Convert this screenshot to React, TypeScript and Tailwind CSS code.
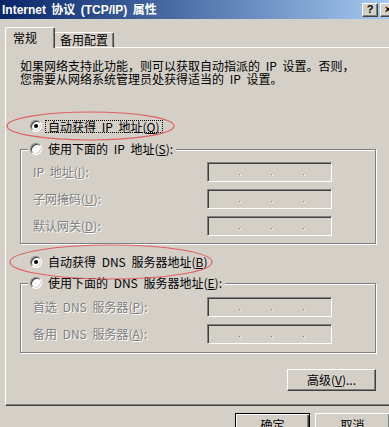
import React from "react";

function Radio({ checked }: { checked?: boolean }) {
  return (
    <span className="relative inline-block w-[12px] h-[12px] shrink-0 rounded-full bg-white border border-t-[#808080] border-l-[#808080] border-r-white border-b-white shadow-[inset_1px_1px_0_#404040,inset_-1px_-1px_0_#d4d0c8]">
      {checked && (
        <span className="absolute left-[3px] top-[3px] w-[4px] h-[4px] rounded-full bg-black" />
      )}
    </span>
  );
}

function IpDot() {
  return (
    <span className="w-[3px] h-[20px] flex items-center justify-center shrink-0">
      <span className="block w-[1px] h-[1px] mt-[5px] bg-[#808080] shadow-[1px_1px_0_#fff]" />
    </span>
  );
}

function IpBox() {
  return (
    <div className="w-[125px] h-[20px] shrink-0 flex items-center pl-[1px] border border-t-[#808080] border-l-[#808080] border-r-white border-b-white shadow-[inset_1px_1px_0_#404040] bg-[#d4d0c8]">
      <span className="w-[29px] shrink-0" />
      <IpDot />
      <span className="w-[29px] shrink-0" />
      <IpDot />
      <span className="w-[29px] shrink-0" />
      <IpDot />
    </div>
  );
}

function Field({ label, first }: { label: React.ReactNode; first?: boolean }) {
  return (
    <div className={`flex items-center h-[20px] ${first ? "" : "mt-[7px]"}`}>
      <span className="w-[186px] pl-[12px] whitespace-nowrap text-[#808080] [text-shadow:1px_1px_0_#fff] leading-[14px]">
        {label}
      </span>
      <IpBox />
    </div>
  );
}

function Button({
  children,
  isDefault,
  className = "",
}: {
  children: React.ReactNode;
  isDefault?: boolean;
  className?: string;
}) {
  return (
    <div
      className={`flex items-center justify-center shrink-0 bg-[#d4d0c8] leading-[14px] ${
        isDefault
          ? "border border-black shadow-[inset_1px_1px_0_#fff,inset_-1px_-1px_0_#404040,inset_-2px_-2px_0_#808080]"
          : "border border-t-white border-l-white border-r-[#404040] border-b-[#404040] shadow-[inset_-1px_-1px_0_#808080]"
      } ${className}`}
    >
      {children}
    </div>
  );
}

export default function App() {
  return (
    <div className="relative w-[389px] h-[427px] overflow-hidden bg-[#d4d0c8] text-[12px] text-black font-['Noto_Sans_CJK_SC',sans-serif] [word-spacing:3px]">
      {/* Title bar */}
      <div className="h-[19px] flex items-center bg-linear-to-r from-[#0a246a] to-[#a6caf0] pl-[2px]">
        <span className="flex-1 min-w-0 whitespace-nowrap text-white font-bold text-[12px] leading-[14px] [word-spacing:2px] font-['Liberation_Sans','Noto_Sans_CJK_SC',sans-serif]">
          Internet 协议 (TCP/IP) 属性
        </span>
        <div className="w-[16px] h-[14px] shrink-0 flex items-center justify-center bg-[#d4d0c8] border border-t-white border-l-white border-r-[#404040] border-b-[#404040] shadow-[inset_-1px_-1px_0_#808080] text-[11px] font-bold leading-none font-['Liberation_Sans',sans-serif]">
          ?
        </div>
        <div className="w-[16px] h-[14px] shrink-0 ml-[2px] mr-[-7px] flex items-center justify-center bg-[#d4d0c8] border border-t-white border-l-white border-r-[#404040] border-b-[#404040] shadow-[inset_-1px_-1px_0_#808080] text-[11px] font-bold leading-none font-['Liberation_Sans',sans-serif]">
          ×
        </div>
      </div>

      {/* Tabs */}
      <div className="h-[28px] flex items-end pl-[5px]">
        <div className="relative z-10 mb-[-1px] w-[50px] h-[21px] bg-[#d4d0c8] border-l border-t border-white border-r border-r-[#404040] shadow-[inset_-1px_0_0_#808080] rounded-tl-[2px] rounded-tr-[2px] pl-[7px] pt-[3px] leading-[14px]">
          常规
        </div>
        <div className="w-[59px] h-[15px] bg-[#d4d0c8] border-t border-white border-r border-r-[#404040] shadow-[inset_-1px_0_0_#808080] rounded-tr-[2px] pl-[5px] pt-[0px] leading-[14px] whitespace-nowrap">
          备用配置
        </div>
      </div>

      {/* Panel */}
      <div className="ml-[5px] w-[400px] h-[359px] flex flex-col border-l border-t border-white border-r border-b border-r-[#404040] border-b-[#404040] shadow-[inset_-1px_-1px_0_#808080]">
        <div className="mt-[11px] ml-[14px] whitespace-nowrap">
          <div className="h-[13px] leading-[13px]">
            如果网络支持此功能，则可以获取自动指派的 IP 设置。否则，
          </div>
          <div className="h-[13px] leading-[13px]">
            您需要从网络系统管理员处获得适当的 IP 设置。
          </div>
        </div>

        <div className="mt-[33px] ml-[24px] h-[16px] flex items-center">
          <Radio checked />
          <span className="ml-[3px] px-[2px] border border-dotted border-black leading-[11px] whitespace-nowrap">
            自动获得 IP 地址(<span className="underline">O</span>)
          </span>
        </div>

        <div className="relative mt-[15px] ml-[14px] w-[356px] h-[95px] shrink-0 border border-[#808080] shadow-[1px_1px_0_#fff,inset_1px_1px_0_#fff] pt-[12px]">
          <div className="absolute left-[7px] top-[-9px] h-[16px] flex items-center bg-[#d4d0c8] pl-[2px] pr-[3px]">
            <Radio />
            <span className="ml-[6px] leading-[14px] whitespace-nowrap">
              使用下面的 IP 地址(<span className="underline">S</span>):
            </span>
          </div>
          <Field
            first
            label={
              <>
                IP 地址(<span className="underline">I</span>):
              </>
            }
          />
          <Field
            label={
              <>
                子网掩码(<span className="underline">U</span>):
              </>
            }
          />
          <Field
            label={
              <>
                默认网关(<span className="underline">D</span>):
              </>
            }
          />
        </div>

        <div className="mt-[10px] ml-[24px] h-[16px] flex items-center">
          <Radio checked />
          <span className="ml-[6px] leading-[14px] whitespace-nowrap">
            自动获得 DNS 服务器地址(<span className="underline">B</span>)
          </span>
        </div>

        <div className="relative mt-[13px] ml-[14px] w-[356px] h-[70px] shrink-0 border border-[#808080] shadow-[1px_1px_0_#fff,inset_1px_1px_0_#fff] pt-[13px]">
          <div className="absolute left-[7px] top-[-9px] h-[16px] flex items-center bg-[#d4d0c8] pl-[2px] pr-[3px]">
            <Radio />
            <span className="ml-[6px] leading-[14px] whitespace-nowrap">
              使用下面的 DNS 服务器地址(<span className="underline">E</span>):
            </span>
          </div>
          <Field
            first
            label={
              <>
                首选 DNS 服务器(<span className="underline">P</span>):
              </>
            }
          />
          <Field
            label={
              <>
                备用 DNS 服务器(<span className="underline">A</span>):
              </>
            }
          />
        </div>

        <Button className="mt-[16px] ml-[281px] w-[89px] h-[22px]">
          <span>
            高级(<span className="underline">V</span>)...
          </span>
        </Button>
      </div>

      {/* Bottom buttons */}
      <div className="mt-[7px] flex">
        <Button isDefault className="ml-[235px] w-[75px] h-[23px]">
          确定
        </Button>
        <Button className="ml-[5px] w-[75px] h-[23px]">取消</Button>
      </div>

      {/* Red annotation ellipses */}
      <svg
        className="absolute inset-0 pointer-events-none"
        width="389"
        height="427"
        viewBox="0 0 389 427"
      >
        <ellipse cx="90.5" cy="126" rx="83.5" ry="14" fill="none" stroke="#e06060" strokeWidth="1.2" />
        <ellipse cx="111" cy="262" rx="101" ry="17" fill="none" stroke="#e06060" strokeWidth="1.2" />
      </svg>
    </div>
  );
}
